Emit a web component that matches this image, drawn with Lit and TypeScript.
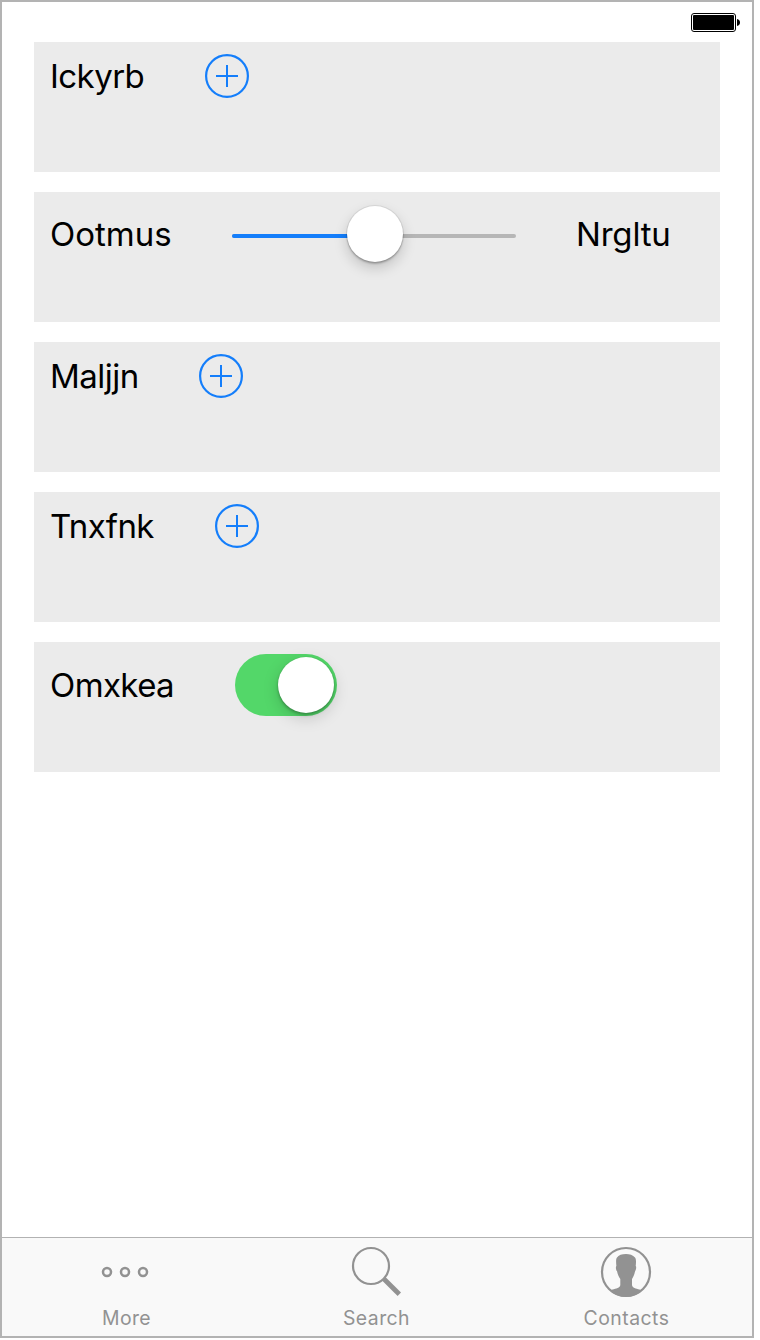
import { LitElement, html, css, svg } from "lit";
import { customElement, property } from "lit/decorators.js";

type Control = "add" | "slider" | "switch";
interface Row { label: string; width: number; spacing: number; control: Control; trailing?: string }

const ROWS: Row[] = [
  { label: "Ickyrb", width: 95, spacing: -0.55, control: "add" },
  { label: "Ootmus", width: 122, spacing: 0, control: "slider", trailing: "Nrgltu" },
  { label: "Maljjn", width: 89, spacing: -0.5, control: "add" },
  { label: "Tnxfnk", width: 105, spacing: -0.6, control: "add" },
  { label: "Omxkea", width: 125, spacing: -0.6, control: "switch" },
];

@customElement("add-button")
class AddButton extends LitElement {
  static styles = css`
    :host { display: block; width: 44px; height: 44px; }
    .icon { display: block; fill: none; stroke: #147efb; stroke-width: 2; }
    .ring { stroke-width: 2.2; }
  `;
  render() {
    return html`<svg class="icon" width="44" height="44" viewBox="0 0 44 44">
      <circle class="ring" cx="22" cy="22" r="20.9"></circle>
      <path d="M11 22H33M22 11V33"></path>
    </svg>`;
  }
}

@customElement("value-slider")
class ValueSlider extends LitElement {
  @property({ type: Number }) value = 0.5;
  static styles = css`
    :host { display: grid; width: 284px; height: 60px; align-items: center; }
    .track, .thumb-row { grid-area: 1 / 1; }
    .track { display: flex; height: 4px; margin-top: 4px; border-radius: 2px; overflow: hidden; background: #b6b6b6; }
    .fill { background: #147efb; }
    .thumb-row { display: flex; justify-content: center; }
    .thumb { width: 56px; height: 56px; margin-left: 2px; border-radius: 50%; background: #fff;
      box-shadow: 0 0 0 1px rgba(0,0,0,.07), 0 2px 2px rgba(0,0,0,.22), 0 6px 14px rgba(0,0,0,.18); }
  `;
  render() {
    return html`<div class="track"><div class="fill" style="width:${this.value * 100}%"></div></div>
      <div class="thumb-row"><div class="thumb"></div></div>`;
  }
}

@customElement("toggle-switch")
class ToggleSwitch extends LitElement {
  static styles = css`
    :host { display: flex; box-sizing: border-box; width: 102px; height: 62px; padding: 3px; border-radius: 31px;
      justify-content: flex-end; background: #53d769; }
    .thumb { width: 56px; height: 56px; border-radius: 50%; background: #fff;
      box-shadow: 0 0 1px rgba(0,0,0,.15), 0 2px 3px rgba(0,0,0,.25), 0 5px 16px rgba(0,0,0,.17); }
  `;
  render() { return html`<div class="thumb"></div>`; }
}

const TABS = [
  {
    label: "More", spacing: 0.4,
    icon: svg`<g fill="none" stroke="#929292" stroke-width="2.5">
      <circle cx="7" cy="27" r="4"/><circle cx="25" cy="27" r="4"/><circle cx="43" cy="27" r="4"/></g>`,
  },
  {
    label: "Search", spacing: 0.45,
    icon: svg`<g fill="none" stroke="#929292"><circle cx="21" cy="21" r="18" stroke-width="2.2"/>
      <path d="M33.5 33.5L49.3 49.2" stroke-width="4.8"/></g>`,
  },
  {
    label: "Contacts", spacing: 0.5,
    icon: svg`<circle cx="26" cy="27" r="24" fill="none" stroke="#929292" stroke-width="2.2"/>
      <path fill="#929292" d="M26 9C29.5 9 33 10 35 12.5C36.2 14 36.2 17 35.7 21C36.6 21.5 36.2 25 35 26.5C34.4 30 33.2 32 32 34V40C32.2 43 36 43.5 39.5 44.5L42 45.5C38 49.5 32 51.8 26 51.8C20 51.8 14 49.5 10 45.5L12.5 44.5C16 43.5 20.1 43 20.3 40V34C19 32 17.7 30 17.1 26.5C15.8 25 15.5 21.5 16.4 21C16 17 15.8 14 17 12.5C18.5 10 22 9 26 9Z"/>`,
  },
];

@customElement("app-root")
class AppRoot extends LitElement {
  static styles = css`
    :host { display: block; width: 760px; height: 1340px; background: #fff; font-family: Inter, "Liberation Sans", sans-serif; }
    .screen { display: flex; flex-direction: column; box-sizing: border-box; width: 754px; height: 1338px; border: 2px solid #b3b3b3; }
    .status { display: flex; justify-content: flex-end; height: 29px; padding: 11px 12px 0 0; }
    .battery { display: block; }
    .rows { display: flex; flex: 1; flex-direction: column; gap: 20px; padding: 0 32px; }
    .row { display: flex; box-sizing: border-box; height: 130px; padding: 12px 16px; align-items: flex-start; background: #ebebeb; }
    .line { display: flex; align-items: center; gap: 60px; }
    .label { font-size: 33px; line-height: 40px; white-space: nowrap; color: #000; }
    .tabs { display: grid; grid-template-columns: repeat(3, 250px); height: 98px; border-top: 1px solid #b2b2b2; background: #f9f9f9; }
    .tab { display: flex; flex-direction: column; align-items: center; padding-right: 2px; color: #929292; }
    .icon { display: block; margin: 7px 0 0; }
    .caption { margin: 7px 0 0 1px; font-size: 19.4px; line-height: 24px; }
  `;

  private control(kind: Control) {
    if (kind === "add") return html`<add-button></add-button>`;
    if (kind === "slider") return html`<value-slider .value=${0.5}></value-slider>`;
    return html`<toggle-switch></toggle-switch>`;
  }

  render() {
    return html`<div class="screen">
      <div class="status">
        <svg class="battery" width="50" height="20" viewBox="0 0 50 20">
          <rect x="1.5" y=".5" width="44" height="18" rx="2.5" fill="#fff" stroke="#000"></rect>
          <rect x="3" y="2" width="41" height="15" rx="1" fill="#000"></rect>
          <path d="M47 6C49 6.5 50 7.8 50 9.5S49 12.5 47 13Z"></path>
        </svg>
      </div>
      <div class="rows">
        ${ROWS.map((r) => html`<div class="row"><div class="line">
          <span class="label" style="width:${r.width}px;letter-spacing:${r.spacing}px">${r.label}</span>
          ${this.control(r.control)}
          ${r.trailing ? html`<span class="label" style="letter-spacing:-0.2px">${r.trailing}</span>` : ""}
        </div></div>`)}
      </div>
      <div class="tabs">
        ${TABS.map((t) => html`<div class="tab">
          <svg class="icon" width="52" height="54" viewBox="0 0 52 54">${t.icon}</svg>
          <span class="caption" style="letter-spacing:${t.spacing}px">${t.label}</span>
        </div>`)}
      </div>
    </div>`;
  }
}
